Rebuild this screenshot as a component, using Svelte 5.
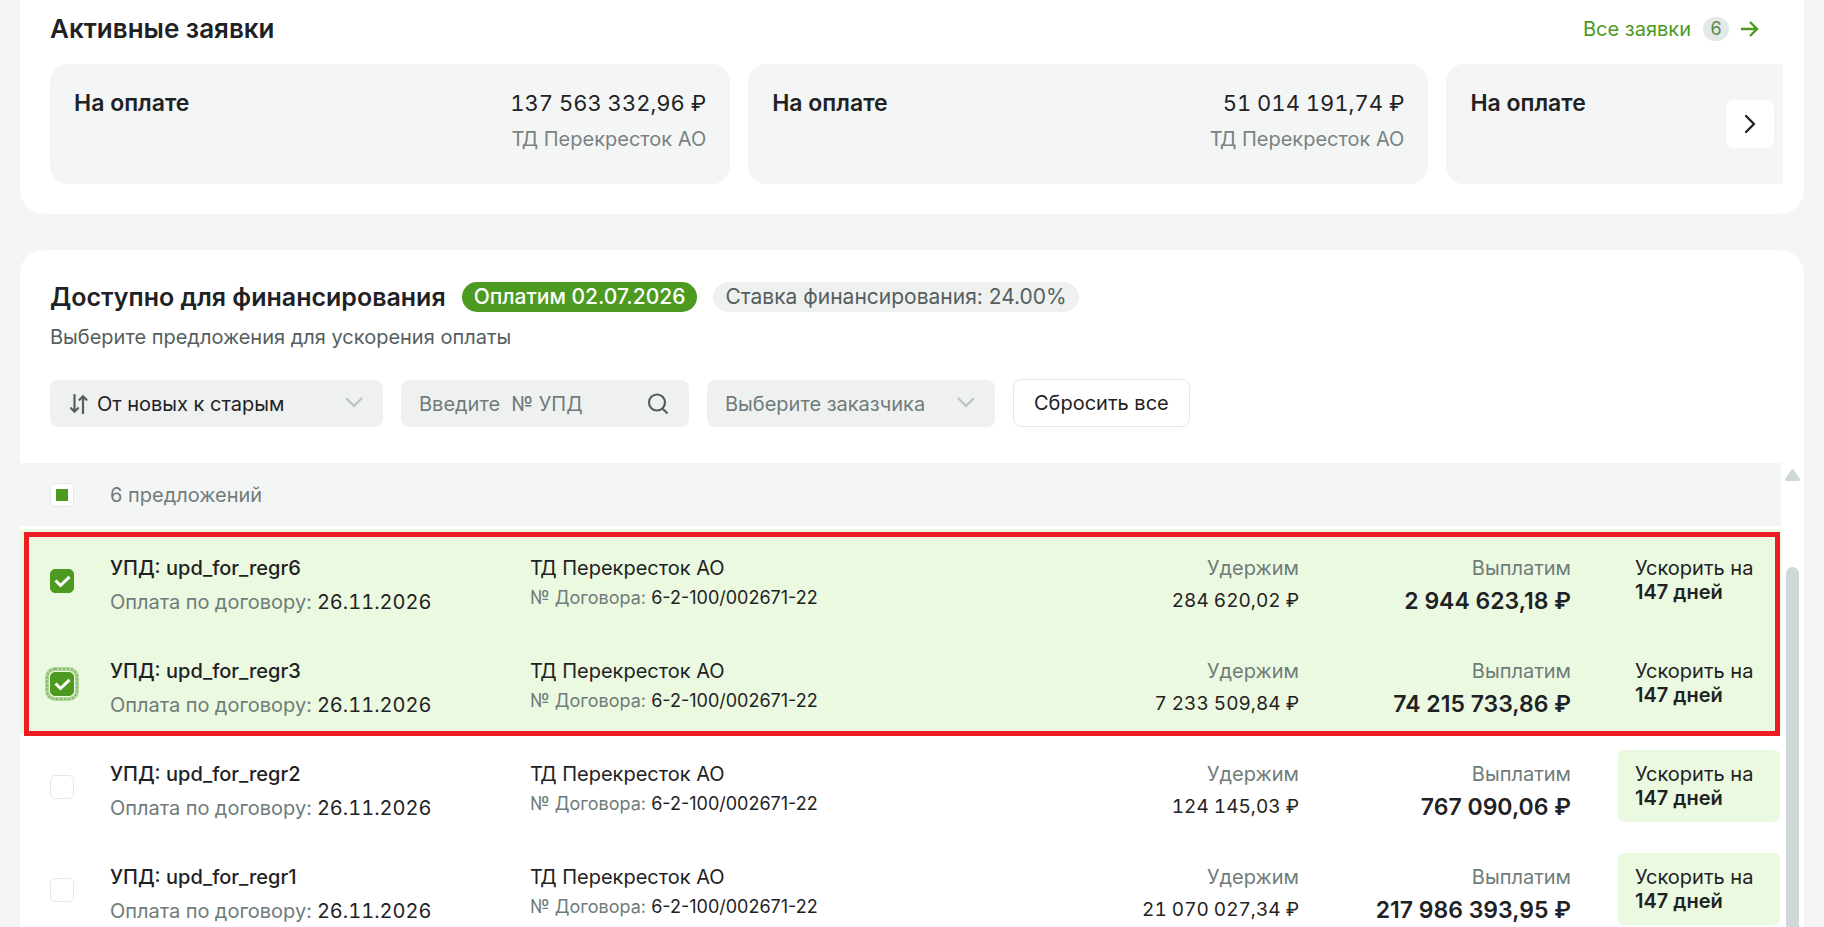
<script>
  let sort = $state('new')
  let number = $state('')
  let customer = $state('')

  const requests = [
    { id: 1, status: 'На оплате', amount: '137 563 332,96 ₽', company: 'ТД Перекресток АО' },
    { id: 2, status: 'На оплате', amount: '51 014 191,74 ₽', company: 'ТД Перекресток АО' },
    { id: 3, status: 'На оплате', amount: '', company: '' }
  ]

  let offers = $state([
    { name: 'upd_for_regr6', hold: '284 620,02 ₽', pay: '2 944 623,18 ₽', checked: true },
    { name: 'upd_for_regr3', hold: '7 233 509,84 ₽', pay: '74 215 733,86 ₽', checked: true, focused: true },
    { name: 'upd_for_regr2', hold: '124 145,03 ₽', pay: '767 090,06 ₽', checked: false },
    { name: 'upd_for_regr1', hold: '21 070 027,34 ₽', pay: '217 986 393,95 ₽', checked: false }
  ])

  let allChecked = $derived(offers.every((o) => o.checked))
  let someChecked = $derived(offers.some((o) => o.checked) && !allChecked)

  const toggleAll = (e) => {
    offers.forEach((o) => (o.checked = e.target.checked))
  }

  const reset = () => {
    sort = 'new'
    number = ''
    customer = ''
  }
</script>

<div class="page">
  <section class="panel requests">
    <header class="requests-head">
      <h2>Активные заявки</h2>
      <a class="all-link" href="#requests">
        Все заявки
        <span class="count">6</span>
        <svg width="18" height="18" viewBox="0 0 18 18" fill="none" stroke="currentColor" stroke-width="2.4">
          <path d="M0 9h16M9 2l7 7-7 7" />
        </svg>
      </a>
    </header>

    <div class="carousel">
      <div class="track">
        {#each requests as request (request.id)}
          <article class="card">
            <h3>{request.status}</h3>
            <div class="card-info">
              <p class="card-amount">{request.amount}</p>
              <p class="card-company">{request.company}</p>
            </div>
          </article>
        {/each}
      </div>
      <button class="next" aria-label="Вперёд">
        <svg width="12" height="20" viewBox="0 0 12 20" fill="none" stroke="currentColor" stroke-width="2.4">
          <path d="m2 2 8 8-8 8" stroke-linecap="round" stroke-linejoin="round" />
        </svg>
      </button>
    </div>
  </section>

  <section class="panel offers">
    <div class="offers-head">
      <div class="title-row">
        <h2>Доступно для финансирования</h2>
        <span class="chip chip-green">Оплатим 02.07.2026</span>
        <span class="chip">Ставка финансирования: 24.00%</span>
      </div>
      <p class="subtitle">Выберите предложения для ускорения оплаты</p>

      <div class="filters">
        <div class="field field-sort">
          <svg class="sort-icon" width="18" height="20" viewBox="0 0 18 20" fill="none" stroke="currentColor" stroke-width="2.2">
            <path d="M4.500 1v16.500M1 14.200l3.500 3.500L8 14.200M13 19V2.500M9.500 5.800 13 2.300l3.500 3.500" stroke-linecap="round" />
          </svg>
          <select aria-label="Сортировка" bind:value={sort}>
            <option value="new">От новых к старым</option>
            <option value="old">От старых к новым</option>
          </select>
          <svg class="chevron" width="18" height="14" viewBox="0 0 18 14" fill="none" stroke="currentColor" stroke-width="2">
            <path d="m1 1 8 8 8-8" />
          </svg>
        </div>

        <div class="field">
          <input type="text" aria-label="Номер УПД" placeholder={'Введите\u00a0 № УПД'} bind:value={number} />
          <svg class="search-icon" width="22" height="22" viewBox="0 0 22 22" fill="none" stroke="currentColor" stroke-width="2.2">
            <circle cx="10" cy="9.500" r="8" />
            <path d="m15.500 15.500 5 5" />
          </svg>
        </div>

        <div class="field">
          <select class:placeholder={!customer} aria-label="Заказчик" bind:value={customer}>
            <option value="">Выберите заказчика</option>
            <option value="td">ТД Перекресток АО</option>
          </select>
          <svg class="chevron" width="18" height="14" viewBox="0 0 18 14" fill="none" stroke="currentColor" stroke-width="2">
            <path d="m1 1 8 8 8-8" />
          </svg>
        </div>

        <button class="reset" onclick={reset}>Сбросить все</button>
      </div>
    </div>

    <div class="list">
      <div class="list-body">
        <table>
          <colgroup>
            <col class="col-check" />
            <col class="col-doc" />
            <col />
            <col class="col-hold" />
            <col class="col-pay" />
            <col class="col-speed" />
          </colgroup>
          <thead>
            <tr>
              <th class="cell-check">
                <span class="check">
                  <input
                    id="check-all"
                    type="checkbox"
                    checked={allChecked}
                    indeterminate={someChecked}
                    onchange={toggleAll}
                  />
                </span>
              </th>
              <th colspan="5"><label for="check-all">6 предложений</label></th>
            </tr>
          </thead>
          <tbody>
            {#each offers as offer (offer.name)}
              <tr class:selected={offer.checked}>
                <td class="cell-check">
                  <span class="check">
                    <input
                      id={offer.name}
                      type="checkbox"
                      class:focused={offer.focused}
                      bind:checked={offer.checked}
                    />
                    {#if offer.checked}
                      <svg width="24" height="24" viewBox="0 0 24 24" fill="none" stroke="#fff" stroke-width="3">
                        <path d="m5.500 11.500 5 5 9-8.700" />
                      </svg>
                    {/if}
                  </span>
                </td>
                <td>
                  <label class="doc" for={offer.name}>УПД: {offer.name}</label>
                  <p class="due"><span class="muted">Оплата по договору:</span> 26.11.2026</p>
                </td>
                <td>
                  <p>ТД Перекресток АО</p>
                  <p class="contract"><span class="muted">№ Договора:</span> 6-2-100/002671-22</p>
                </td>
                <td class="right">
                  <p class="muted">Удержим</p>
                  <p class="hold">{offer.hold}</p>
                </td>
                <td class="right cell-pay">
                  <p class="muted">Выплатим</p>
                  <p class="pay">{offer.pay}</p>
                </td>
                <td class="cell-speed">
                  <div class="speed">Ускорить на<br /><b>147 дней</b></div>
                </td>
              </tr>
            {/each}
          </tbody>
        </table>
        <div class="highlight"></div>
      </div>

      <div class="scrollbar">
        <svg width="15" height="12" viewBox="0 0 15 12">
          <path d="M6 1.200Q7.500-.8 9 1.200L14.500 9Q15.500 12 13 12H2Q-.5 12 .5 9Z" fill="#cfd8d9" />
        </svg>
        <div class="thumb"></div>
      </div>
    </div>
  </section>
</div>

<style>
  :global(body) {
    margin: 0;
    background: #f5f5f5;
  }

  .page {
    display: flex;
    flex-direction: column;
    gap: 36px;
    height: 100vh;
    padding: 0 20px;
    box-sizing: border-box;
    overflow: hidden;
    color: #1f2224;
    font-family: Inter, Roboto, 'Liberation Sans', sans-serif;
    font-size: 20px;
    line-height: 24px;
  }

  h2,
  h3,
  p {
    margin: 0;
  }

  h2 {
    font-size: 26px;
    font-weight: 600;
    line-height: 32px;
  }

  .panel {
    background: #fff;
  }

  .requests {
    padding: 13px 21px 30px 30px;
    border-radius: 0 0 24px 24px;
  }

  .requests-head {
    display: flex;
    align-items: center;
    justify-content: space-between;
    padding-right: 24px;
    margin-bottom: 19px;
  }

  .all-link {
    display: flex;
    align-items: center;
    gap: 12px;
    color: #4c9a1f;
    text-decoration: none;
  }

  .count {
    width: 26px;
    border-radius: 12px;
    background: #e3e8e8;
    color: #5c8a44;
    font-size: 18px;
    text-align: center;
  }

  .carousel {
    position: relative;
  }

  .track {
    display: flex;
    gap: 18px;
    overflow: hidden;
  }

  .card {
    display: flex;
    flex: 0 0 calc(40% - 13px);
    justify-content: space-between;
    height: 120px;
    padding: 24px;
    box-sizing: border-box;
    border-radius: 18px;
    background: #f4f6f6;
  }

  h3 {
    font-size: 23px;
    font-weight: 600;
    line-height: 30px;
  }

  .card-info {
    text-align: right;
  }

  .card-amount {
    font-size: 22px;
    font-variant-numeric: tabular-nums;
    line-height: 30px;
  }

  .card-company {
    margin-top: 9px;
    color: #7a8282;
  }

  .next {
    position: absolute;
    top: 36px;
    right: 9px;
    display: grid;
    place-items: center;
    width: 48px;
    height: 48px;
    border: 0;
    border-radius: 8px;
    background: #fff;
    color: #1f2224;
  }

  .offers {
    display: flex;
    flex: 1;
    flex-direction: column;
    min-height: 0;
    border-radius: 24px 24px 0 0;
  }

  .offers-head {
    padding: 31px 30px 36px;
  }

  .offers-head h2 {
    font-size: 25px;
  }

  .title-row {
    display: flex;
    align-items: center;
    gap: 16px;
  }

  .chip {
    padding: 0 12px;
    border-radius: 15px;
    background: #eff1f1;
    color: #555e5e;
    font-size: 21px;
    line-height: 30px;
  }

  .chip-green {
    background: #4c9a1f;
    color: #fff;
    font-weight: 500;
  }

  .subtitle {
    margin-top: 12px;
    color: #555e5e;
  }

  .filters {
    display: flex;
    align-items: flex-end;
    gap: 18px;
    margin-top: 30px;
  }

  .field {
    display: flex;
    align-items: center;
    width: 288px;
    height: 47px;
    padding: 0 20px 0 18px;
    box-sizing: border-box;
    border-radius: 8px;
    background: #eff1f1;
  }

  .field-sort {
    width: 333px;
    padding-left: 20px;
  }

  .field select,
  .field input {
    flex: 1;
    min-width: 0;
    height: 47px;
    padding: 0;
    border: 0;
    outline: 0;
    appearance: none;
    background: none;
    color: #1f2224;
    font: inherit;
  }

  .field input::placeholder,
  .field select.placeholder {
    color: #6f7c7a;
    opacity: 1;
  }

  .sort-icon {
    margin-right: 9px;
    color: #555e5e;
  }

  .search-icon {
    color: #555e5e;
  }

  .chevron {
    color: #b9c2c2;
  }

  .reset {
    height: 48px;
    padding: 0 20px;
    border: 1px solid #e3e8e8;
    border-radius: 8px;
    background: #fff;
    color: #1f2224;
    font: inherit;
  }

  .list {
    display: flex;
    flex: 1;
    min-height: 0;
    overflow: hidden;
  }

  .list-body {
    position: relative;
    flex: 1;
  }

  table {
    width: 100%;
    table-layout: fixed;
    border-collapse: separate;
    border-spacing: 0;
  }

  .col-check {
    width: 90px;
  }

  .col-doc {
    width: 420px;
  }

  .col-hold {
    width: 300px;
  }

  .col-pay {
    width: 319px;
  }

  .col-speed {
    width: 163px;
  }

  th {
    height: 63px;
    padding: 0;
    border-bottom: 3px solid #fff;
    background: #f4f6f6;
    color: #6f7c7a;
    font-weight: 400;
    text-align: left;
  }

  td {
    height: 103px;
    padding: 27px 0 0;
    box-sizing: border-box;
    vertical-align: top;
  }

  .selected {
    background: #ebf9e0;
  }

  td.cell-check {
    padding: 0 0 0 30px;
    vertical-align: middle;
  }

  th.cell-check {
    padding-left: 30px;
  }

  .check {
    position: relative;
    display: block;
    width: 24px;
    height: 24px;
  }

  .check input {
    display: grid;
    place-items: center;
    width: 24px;
    height: 24px;
    margin: 0;
    border: 1px solid #e3e8e8;
    border-radius: 5px;
    appearance: none;
    background: #fff;
  }

  .check input:checked {
    border-color: #4c9a1f;
    background: #4c9a1f;
  }

  .check input:indeterminate::before {
    content: '';
    width: 12px;
    height: 12px;
    background: #4c9a1f;
  }

  .check input.focused {
    outline: 2px dotted #8fae84;
    outline-offset: 2px;
    box-shadow: 0 0 0 1px #ebf9e0, 0 0 0 5px #aedb93;
  }

  .check svg {
    position: absolute;
    inset: 0;
    pointer-events: none;
  }

  .doc {
    display: block;
    font-weight: 500;
  }

  .muted {
    color: #6f7c7a;
  }

  .due {
    margin-top: 10px;
    font-variant-numeric: tabular-nums;
  }

  .contract {
    margin-top: 6px;
    font-size: 18px;
  }

  .right {
    text-align: right;
  }

  .cell-pay {
    padding-right: 47px;
  }

  .hold {
    margin-top: 9px;
    font-size: 19px;
    font-variant-numeric: tabular-nums;
  }

  .pay {
    margin-top: 9px;
    font-size: 23px;
    font-weight: 600;
  }

  .cell-speed {
    padding: 15px 1px 0 0;
  }

  .speed {
    padding: 12px 0 12px 17px;
    border-radius: 6px;
    background: #ebf9e0;
  }

  .speed b {
    font-weight: 600;
  }

  .highlight {
    position: absolute;
    top: 69px;
    right: 1px;
    left: 4px;
    height: 204px;
    box-sizing: border-box;
    border: 5px solid #ed1c24;
    pointer-events: none;
  }

  .scrollbar {
    display: flex;
    flex-direction: column;
    align-items: center;
    gap: 86px;
    width: 23px;
    padding-top: 6px;
    box-sizing: border-box;
  }

  .thumb {
    flex: 1;
    width: 13px;
    border-radius: 7px 7px 0 0;
    background: #cfd8d9;
  }
</style>
